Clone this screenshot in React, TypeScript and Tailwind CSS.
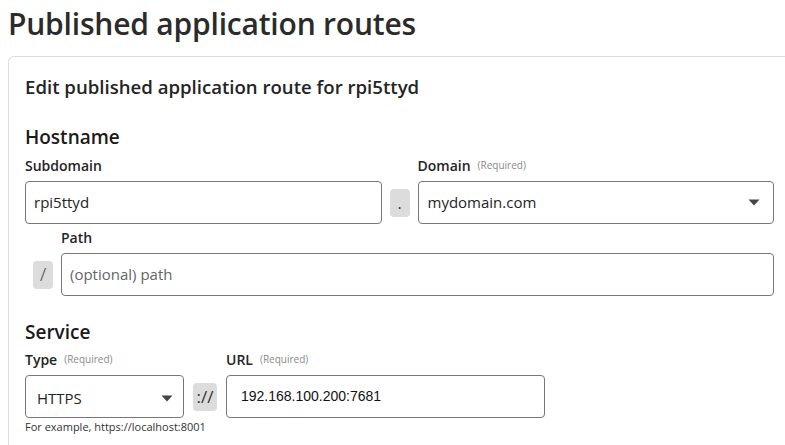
import React from 'react';

const FONT = { fontFamily: '"Open Sans", "Noto Sans", sans-serif' };

const Label = ({ text, required }: { text: string; required?: boolean }) => (
    <div className="flex items-start gap-[7px] h-[29px] pt-[3px] leading-[22px]">
        <span className="text-[14px] font-semibold text-[#242424]">{text}</span>
        <span className="text-[10px] text-[#8a8a8a] leading-[20px]">{required ? '(Required)' : ''}</span>
    </div>
);

const Addon = ({ children, w, size }: { children: React.ReactNode; w: string; size: string }) => (
    <div className={`${w} ${size} h-[28px] shrink-0 rounded-[4px] bg-[#dcdcdc] flex items-center justify-center text-[#333]`}>
        {children}
    </div>
);

const Caret = () => (
    <svg width="12" height="7" viewBox="0 0 12 7" className="shrink-0">
        <path d="M0.5 0.5 L11.5 0.5 L6 6.5 Z" fill="#444" />
    </svg>
);

export default function App() {
    return (
        <div className="w-[785px] h-[445px] overflow-hidden bg-white pl-2 pt-[2px] text-[#242424]" style={FONT}>
            <h1 className="text-[30px] font-semibold leading-[44px] text-[#2b2b2b] tracking-[-0.2px]">
                Published application routes
            </h1>

            <div className="mt-[10px] w-[790px] border border-[#dcdcdc] rounded-[6px] px-4 pt-[17px] pb-6">
                <h2 className="text-[18.6px] font-semibold leading-[26px] text-[#242424]">
                    Edit published application route for rpi5ttyd
                </h2>

                {/* Hostname */}
                <h3 className="mt-[24px] text-[19px] font-semibold leading-[26px] text-[#1a1a1a]">Hostname</h3>

                <div className="mt-[2px] flex items-end gap-2 w-[749px]">
                    <div className="flex-1">
                        <Label text="Subdomain" />
                        <div className="h-[43px] border border-[#777] rounded-[4px] flex items-center px-[8px] text-[15px] text-[#242424]">
                            rpi5ttyd
                        </div>
                    </div>
                    <div className="h-[43px] flex items-center">
                        <Addon w="w-[20px]" size="text-[16px]">.</Addon>
                    </div>
                    <div className="flex-1">
                        <Label text="Domain" required />
                        <div className="h-[43px] border border-[#777] rounded-[4px] flex items-center justify-between pl-[9px] pr-[13px] text-[15px] text-[#242424]">
                            <span>mydomain.com</span>
                            <Caret />
                        </div>
                    </div>
                </div>

                <div className="mt-0 flex items-end gap-2 pl-2 w-[749px]">
                    <div className="h-[43px] flex items-center">
                        <Addon w="w-[20px]" size="text-[18px] font-light">/</Addon>
                    </div>
                    <div className="flex-1">
                        <Label text="Path" />
                        <div className="h-[43px] border border-[#777] rounded-[4px] flex items-center px-[8px] text-[15px] text-[#666]">
                            (optional) path
                        </div>
                    </div>
                </div>

                {/* Service */}
                <h3 className="mt-[23px] text-[19px] font-semibold leading-[26px] text-[#1a1a1a]">Service</h3>

                <div className="mt-[1px] flex items-end gap-[9px]">
                    <div className="w-[159px]">
                        <Label text="Type" required />
                        <div className="h-[43px] border border-[#777] rounded-[4px] flex items-center justify-between pl-[11px] pr-[10px] pt-[3px] text-[15px] text-[#242424]">
                            <span>HTTPS</span>
                            <Caret />
                        </div>
                    </div>
                    <div className="h-[43px] flex items-center">
                        <Addon w="w-[24px]" size="text-[17px]">://</Addon>
                    </div>
                    <div className="w-[319px]">
                        <Label text="URL" required />
                        <div
                            className="h-[43px] border border-[#777] rounded-[4px] flex items-center pl-[14px] text-[14px] text-[#111]"
                            style={{ fontFamily: '"Liberation Sans", Arial, sans-serif' }}
                        >
                            192.168.100.200:7681
                        </div>
                    </div>
                </div>
                <p className="mt-[1px] text-[11px] leading-[16px] text-[#333]">For example, https://localhost:8001</p>
            </div>
        </div>
    );
}
